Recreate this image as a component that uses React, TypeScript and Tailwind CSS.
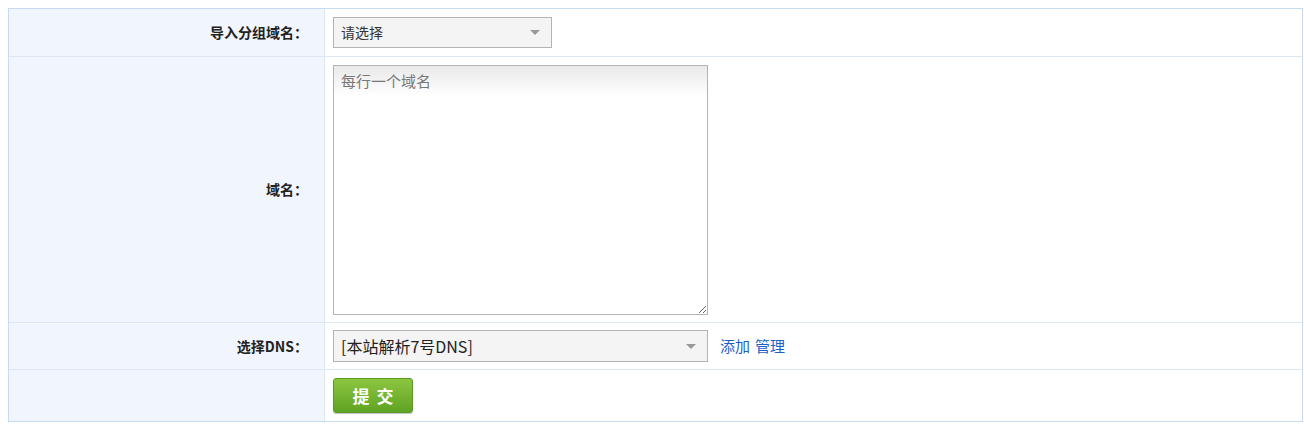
export default function App() {
  const label = "bg-[#f1f5fd] border-r border-[#dde7f4] flex items-center justify-end pr-[16px] text-[14px] font-bold text-[#222]";
  const cell = "flex items-center pl-[8px]";
  return (
    <div className="w-[1304px] h-[426px] bg-white pt-[8px] pl-[8px] font-['Microsoft_YaHei','Noto_Sans_CJK_SC',sans-serif]">
      <div className="w-[1295px] border border-[#c6dbf3] grid grid-cols-[316px_1fr]">
        <div className={`${label} h-[48px] border-b`}>导入分组域名：</div>
        <div className={`${cell} h-[48px] border-b border-[#dde7f4]`}>
          <div className="w-[219px] h-[31px] border border-[#b3b3b3] bg-[#f4f4f4] flex items-center justify-between pl-[7px] pr-[11px] text-[14px] text-[#333]">
            <span>请选择</span>
            <svg width="10" height="5" viewBox="0 0 10 5"><path d="M0 0h10L5 5z" fill="#999" /></svg>
          </div>
        </div>

        <div className={`${label} h-[266px] border-b`}>域名：</div>
        <div className={`${cell} h-[266px] border-b border-[#dde7f4]`}>
          <textarea
            placeholder="每行一个域名"
            className="w-[375px] h-[250px] border border-[#b3b3b3] bg-gradient-to-b from-[#e9e9e9] to-white to-[30px] bg-no-repeat px-[7px] py-[4px] text-[15px] text-[#333] placeholder:text-[#777] outline-none"
          />
        </div>

        <div className={`${label} h-[47px] border-b`}>选择DNS：</div>
        <div className={`${cell} h-[47px] border-b border-[#dde7f4] gap-[12px]`}>
          <div className="w-[375px] h-[32px] border border-[#b3b3b3] bg-[#f4f4f4] flex items-center justify-between pl-[7px] pr-[11px] text-[16px] text-[#222]">
            <span>[本站解析7号DNS]</span>
            <svg width="10" height="5" viewBox="0 0 10 5"><path d="M0 0h10L5 5z" fill="#999" /></svg>
          </div>
          <div className="text-[15px] text-[#1a5fc8] flex gap-[5px]">
            <a className="cursor-pointer">添加</a>
            <a className="cursor-pointer">管理</a>
          </div>
        </div>

        <div className={`${label} h-[51px]`}></div>
        <div className={`${cell} h-[51px] items-start pt-[8px]`}>
          <button className="w-[80px] h-[35px] rounded-[3px] border border-[#5b9a25] bg-gradient-to-b from-[#8cc63f] to-[#5fa324] text-white font-bold text-[17px] tracking-[7px] pl-[7px] shadow-[0_1px_1px_rgba(0,0,0,0.25)]">
            提交
          </button>
        </div>
      </div>
    </div>
  );
}
